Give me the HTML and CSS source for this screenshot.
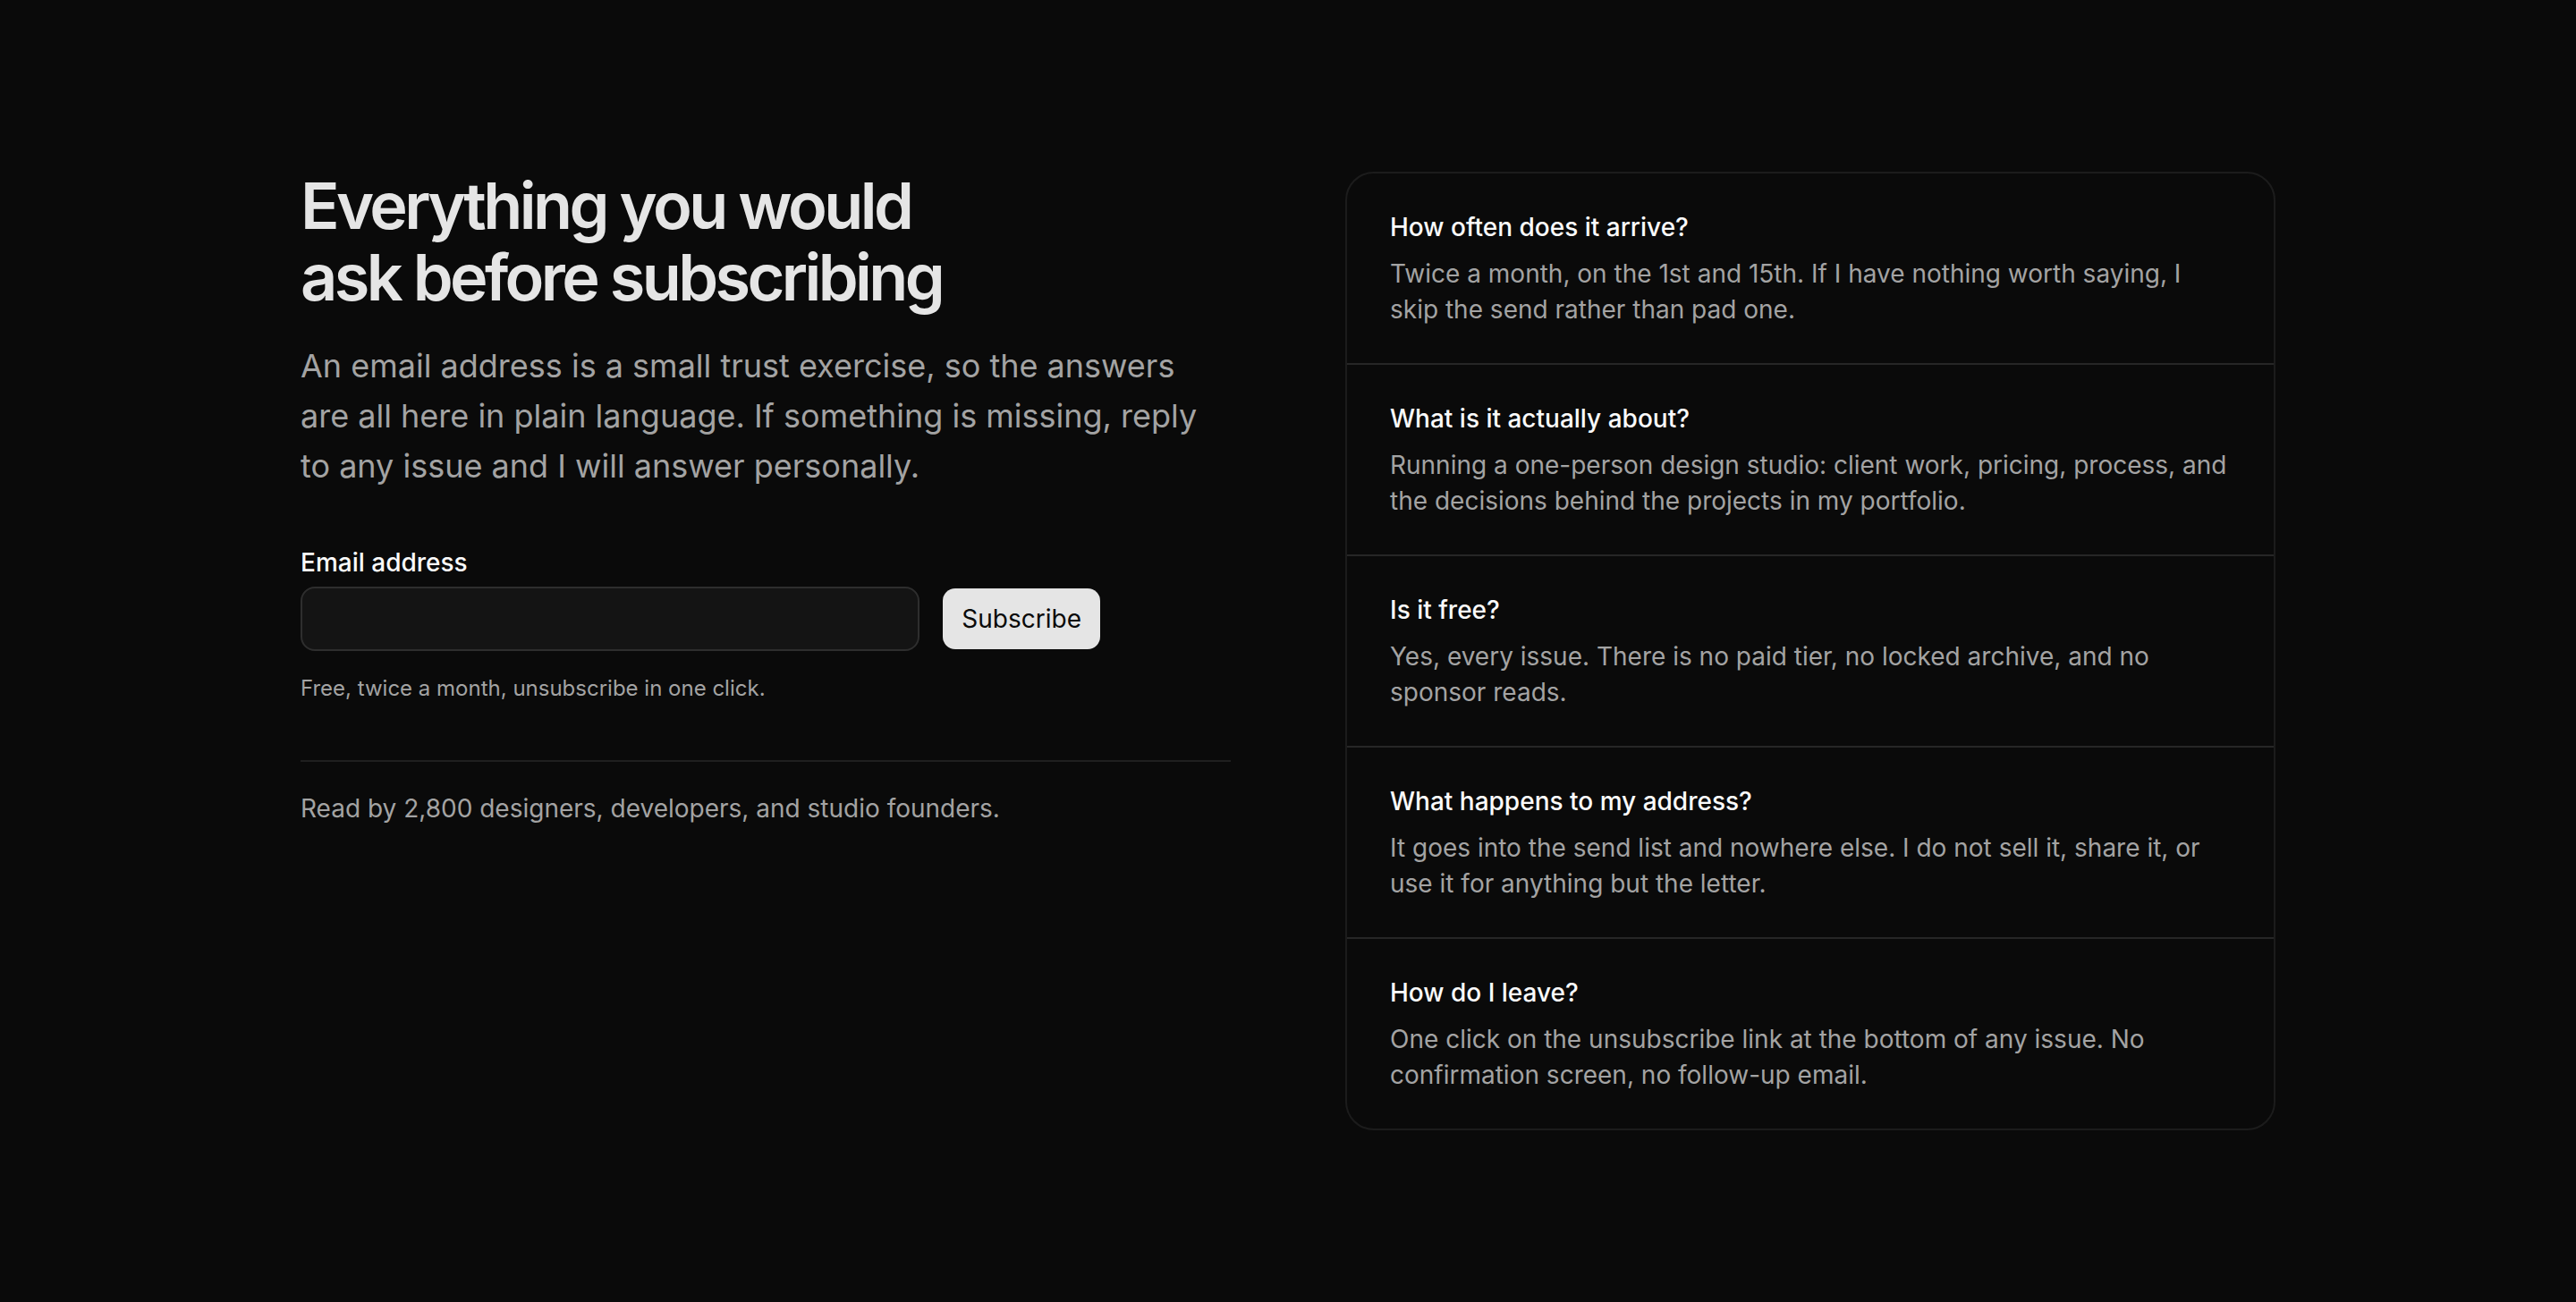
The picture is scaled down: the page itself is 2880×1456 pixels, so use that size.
FILE: index.html
```html
<!DOCTYPE html>
<html lang="en">
<head>
<meta charset="utf-8">
<title>Newsletter FAQ</title>
<link rel="stylesheet" href="styles.css">
</head>
<body>
<main class="page">
  <section class="intro">
    <h1 class="title">Everything you would ask before subscribing</h1>
    <p class="lead">An email address is a small trust exercise, so the answers are all here in plain language. If something is missing, reply to any issue and I will answer personally.</p>
    <form class="signup">
      <label class="label" for="email">Email address</label>
      <div class="signup-row">
        <input class="input" id="email" type="email">
        <button class="button" type="button">Subscribe</button>
      </div>
      <p class="hint">Free, twice a month, unsubscribe in one click.</p>
    </form>
    <div class="proof">Read by 2,800 designers, developers, and studio founders.</div>
  </section>
  <section class="faq">
    <div class="faq-item">
      <h3 class="question">How often does it arrive?</h3>
      <p class="answer">Twice a month, on the 1st and 15th. If I have nothing worth saying, I skip the send rather than pad one.</p>
    </div>
    <div class="faq-item">
      <h3 class="question">What is it actually about?</h3>
      <p class="answer">Running a one-person design studio: client work, pricing, process, and the decisions behind the projects in my portfolio.</p>
    </div>
    <div class="faq-item">
      <h3 class="question">Is it free?</h3>
      <p class="answer">Yes, every issue. There is no paid tier, no locked archive, and no sponsor reads.</p>
    </div>
    <div class="faq-item">
      <h3 class="question">What happens to my address?</h3>
      <p class="answer">It goes into the send list and nowhere else. I do not sell it, share it, or use it for anything but the letter.</p>
    </div>
    <div class="faq-item">
      <h3 class="question">How do I leave?</h3>
      <p class="answer">One click on the unsubscribe link at the bottom of any issue. No confirmation screen, no follow-up email.</p>
    </div>
  </section>
</main>
</body>
</html>
```

FILE: styles.css
```css
* { box-sizing: border-box; }

html, body {
  margin: 0;
  background: #0a0a0a;
}

body {
  font-family: Inter, "Noto Sans", "Liberation Sans", sans-serif;
  color: #a3a3a3;
  min-height: 1456px;
}

.page {
  max-width: 2208px;
  margin: 0 auto;
  padding: 190px 0;
  display: grid;
  grid-template-columns: 1fr 1fr;
  column-gap: 128px;
  align-items: start;
}

.title {
  margin: 0;
  max-width: 760px;
  font-size: 72px;
  line-height: 80px;
  font-weight: 600;
  letter-spacing: -0.05em;
  color: #e5e5e5;
}

.lead {
  margin: 31px 0 0;
  font-size: 36px;
  line-height: 56px;
  color: #a3a3a3;
}

.signup {
  margin-top: 60px;
}

.label {
  display: block;
  font-size: 28px;
  line-height: 40px;
  font-weight: 500;
  color: #fafafa;
}

.signup-row {
  margin-top: 7px;
  max-width: 894px;
  display: flex;
  align-items: center;
  gap: 26px;
}

.input {
  flex: 1;
  height: 72px;
  min-width: 0;
  background: #141414;
  border: 2px solid #2e2e2e;
  border-radius: 16px;
  padding: 0 24px;
  font: inherit;
  font-size: 28px;
  color: #fafafa;
  outline: none;
}

.button {
  height: 68px;
  padding: 0 21px;
  border: 0;
  border-radius: 14px;
  background: #e5e5e5;
  color: #0a0a0a;
  font-family: inherit;
  font-size: 28px;
  font-weight: 400;
}

.hint {
  margin: 26px 0 0;
  font-size: 24px;
  line-height: 32px;
  color: #a3a3a3;
}

.proof {
  margin-top: 64px;
  padding-top: 32px;
  border-top: 2px solid #1f1f1f;
  font-size: 28px;
  line-height: 40px;
  color: #a3a3a3;
}

.faq {
  margin-top: 2px;
  border: 2px solid #1c1c1c;
  border-radius: 32px;
  overflow: hidden;
}

.faq-item {
  padding: 40px 48px;
}

.faq-item + .faq-item {
  border-top: 2px solid #262626;
}

.question {
  margin: 0;
  font-size: 28px;
  line-height: 40px;
  font-weight: 500;
  color: #fafafa;
}

.answer {
  margin: 12px 0 0;
  font-size: 28px;
  line-height: 40px;
  color: #a3a3a3;
}
```
